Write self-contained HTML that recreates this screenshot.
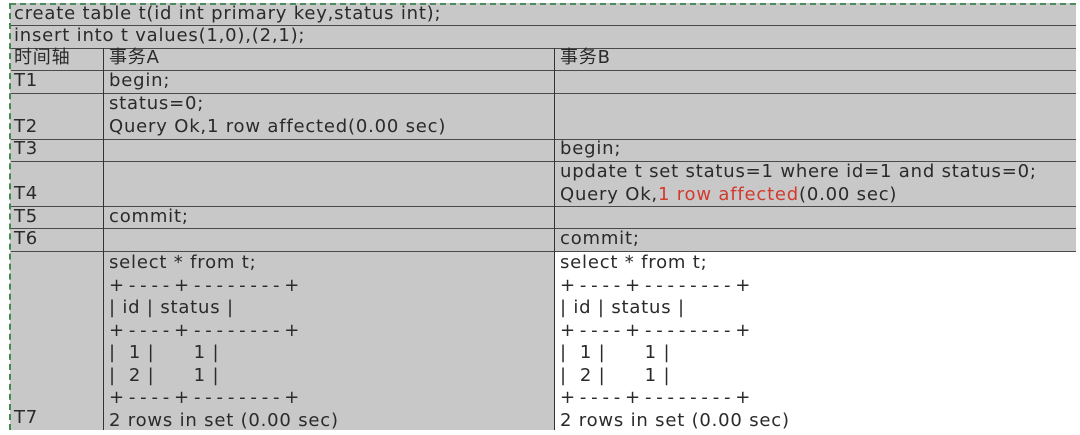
<!DOCTYPE html>
<html><head><meta charset="utf-8"><style>
body{margin:0;width:1080px;height:435px;background:#fff;position:relative;overflow:hidden;font-family:"DejaVu Sans","Noto Sans CJK SC",sans-serif;font-size:18px;color:#2a2a2a;letter-spacing:0.8px}
.bg{position:absolute;background:#c8c8c8}
.h{position:absolute;height:1px;background:#4a4a4a}
.v{position:absolute;width:1px;background:#333}
.t{position:absolute;white-space:pre;line-height:22.5px}
.r{color:#d23a2e}
.d{letter-spacing:4.8px}
</style></head><body>
<div class="bg" style="left:10px;top:3px;width:1066px;height:427px"></div>
<div style="position:absolute;left:555px;top:251px;width:521px;height:179px;background:#fff"></div>
<div style="position:absolute;left:9px;top:3px;width:0;height:427px;border-left:2px dashed #3f8a4f"></div>
<div style="position:absolute;left:10px;top:3px;width:1066px;height:0;border-top:2px dashed #4e8a5e"></div>
<div class="h" style="left:11px;top:25px;width:1065px"></div>
<div class="h" style="left:11px;top:48px;width:1065px"></div>
<div class="h" style="left:11px;top:70px;width:1065px"></div>
<div class="h" style="left:11px;top:93px;width:1065px"></div>
<div class="h" style="left:11px;top:139px;width:1065px"></div>
<div class="h" style="left:11px;top:161px;width:1065px"></div>
<div class="h" style="left:11px;top:206px;width:1065px"></div>
<div class="h" style="left:11px;top:228px;width:1065px"></div>
<div class="h" style="left:11px;top:251px;width:1065px"></div>
<div class="v" style="left:103px;top:48px;height:382px"></div>
<div class="v" style="left:554px;top:48px;height:382px"></div>
<div class="t" style="left:14px;top:3px">create table t(id int primary key,status int);</div>
<div class="t" style="left:14px;top:25px">insert into t values(1,0),(2,1);</div>
<div class="t" style="left:14px;top:47px">时间轴</div>
<div class="t" style="left:109px;top:47px">事务A</div>
<div class="t" style="left:560px;top:47px">事务B</div>
<div class="t" style="left:14px;top:70px">T1</div>
<div class="t" style="left:109px;top:70px">begin;</div>
<div class="t" style="left:14px;top:116px">T2</div>
<div class="t" style="left:109px;top:93px">status=0;
Query Ok,1 row affected(0.00 sec)</div>
<div class="t" style="left:14px;top:138px">T3</div>
<div class="t" style="left:560px;top:138px">begin;</div>
<div class="t" style="left:14px;top:183px">T4</div>
<div class="t" style="left:560px;top:161px">update t set status=1 where id=1 and status=0;
Query Ok,<span class="r">1 row affected</span>(0.00 sec)</div>
<div class="t" style="left:14px;top:206px">T5</div>
<div class="t" style="left:109px;top:206px">commit;</div>
<div class="t" style="left:14px;top:228px">T6</div>
<div class="t" style="left:560px;top:228px">commit;</div>
<div class="t" style="left:14px;top:407px">T7</div>
<div class="t" style="left:109px;top:252px">select * from t;
<span class="d">+----+--------+</span>
| id | status |
<span class="d">+----+--------+</span>
|  1 |      1 |
|  2 |      1 |
<span class="d">+----+--------+</span>
2 rows in set (0.00 sec)</div>
<div class="t" style="left:560px;top:252px">select * from t;
<span class="d">+----+--------+</span>
| id | status |
<span class="d">+----+--------+</span>
|  1 |      1 |
|  2 |      1 |
<span class="d">+----+--------+</span>
2 rows in set (0.00 sec)</div>
</body></html>
